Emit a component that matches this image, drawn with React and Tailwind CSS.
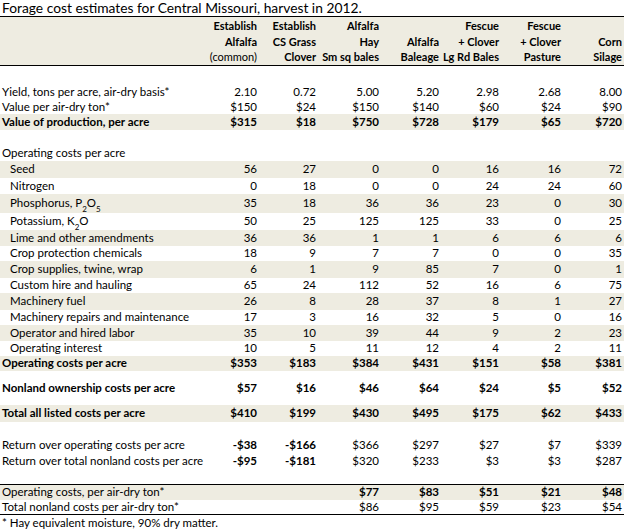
import React from 'react';

const cols = 'grid grid-cols-[200px_59px_59px_63px_60px_60px_62px_61px]';

// header labels, one array per column, lines top to bottom
const heads = [
  ['Establish', 'Alfalfa', '(common)'],
  ['Establish', 'CS Grass', 'Clover'],
  ['Alfalfa', 'Hay', 'Sm sq bales'],
  ['', 'Alfalfa', 'Baleage'],
  ['Fescue', '+ Clover', 'Lg Rd Bales'],
  ['Fescue', '+ Clover', 'Pasture'],
  ['', 'Corn', 'Silage'],
];

const P2O5 = <>Phosphorus, P<sub className="text-[8px] align-[-3px]">2</sub>O<sub className="text-[8px] align-[-3px]">5</sub></>;
const K2O = <>Potassium, K<sub className="text-[8px] align-[-3px]">2</sub>O</>;

const rows = [
  { h: 'h-[18px]' },
  { label: 'Yield, tons per acre, air-dry basis*', h: 'h-[16px]', v: ['2.10', '0.72', '5.00', '5.20', '2.98', '2.68', '8.00'] },
  { label: 'Value per air-dry ton*', h: 'h-[14px]', v: ['$150', '$24', '$150', '$140', '$60', '$24', '$90'] },
  { label: 'Value of production, per acre', h: 'h-[16px]', bg: true, bold: true, v: ['$315', '$18', '$750', '$728', '$179', '$65', '$720'] },
  { h: 'h-[16px]' },
  { label: 'Operating costs per acre', h: 'h-[15px]' },
  { label: 'Seed', sub: true, h: 'h-[17px]', bg: true, v: ['56', '27', '0', '0', '16', '16', '72'] },
  { label: 'Nitrogen', sub: true, h: 'h-[16px]', v: ['0', '18', '0', '0', '24', '24', '60'] },
  { label: P2O5, sub: true, h: 'h-[19px]', bg: true, v: ['35', '18', '36', '36', '23', '0', '30'] },
  { label: K2O, sub: true, h: 'h-[17px]', v: ['50', '25', '125', '125', '33', '0', '25'] },
  { label: 'Lime and other amendments', sub: true, h: 'h-[16px]', bg: true, v: ['36', '36', '1', '1', '6', '6', '6'] },
  { label: 'Crop protection chemicals', sub: true, h: 'h-[15px]', v: ['18', '9', '7', '7', '0', '0', '35'] },
  { label: 'Crop supplies, twine, wrap', sub: true, h: 'h-[17px]', bg: true, v: ['6', '1', '9', '85', '7', '0', '1'] },
  { label: 'Custom hire and hauling', sub: true, h: 'h-[15px]', v: ['65', '24', '112', '52', '16', '6', '75'] },
  { label: 'Machinery fuel', sub: true, h: 'h-[17px]', bg: true, v: ['26', '8', '28', '37', '8', '1', '27'] },
  { label: 'Machinery repairs and maintenance', sub: true, h: 'h-[15px]', v: ['17', '3', '16', '32', '5', '0', '16'] },
  { label: 'Operator and hired labor', sub: true, h: 'h-[16px]', bg: true, v: ['35', '10', '39', '44', '9', '2', '23'] },
  { label: 'Operating interest', sub: true, h: 'h-[15px]', v: ['10', '5', '11', '12', '4', '2', '11'] },
  { label: 'Operating costs per acre', h: 'h-[15px]', bg: true, bold: true, v: ['$353', '$183', '$384', '$431', '$151', '$58', '$381'] },
  { label: 'Nonland ownership costs per acre', h: 'h-[34px]', bold: true, v: ['$57', '$16', '$46', '$64', '$24', '$5', '$52'] },
  { label: 'Total all listed costs per acre', h: 'h-[17px]', bg: true, bold: true, v: ['$410', '$199', '$430', '$495', '$175', '$62', '$433'] },
  { h: 'h-[15px]' },
  { label: 'Return over operating costs per acre', h: 'h-[16px]', v: ['-$38', '-$166', '$366', '$297', '$27', '$7', '$339'], boldCols: [0, 1] },
  { label: 'Return over total nonland costs per acre', h: 'h-[16px]', v: ['-$95', '-$181', '$320', '$233', '$3', '$3', '$287'], boldCols: [0, 1] },
  { h: 'h-[16px]', line: true },
  { label: 'Operating costs, per air-dry ton*', h: 'h-[15px]', bg: true, v: ['', '', '$77', '$83', '$51', '$21', '$48'], boldCols: [2, 3, 4, 5, 6] },
  { label: 'Total nonland costs per air-dry ton*', h: 'h-[15px]', line: true, v: ['', '', '$86', '$95', '$59', '$23', '$54'] },
];

function Row({ r }) {
  const rowCls = `${cols} ${r.h} items-center ${r.bg ? 'bg-[#eeece1]' : ''} ${r.line ? 'border-b border-black' : ''}`;
  return (
    <div className={rowCls}>
      <div className={`whitespace-nowrap ${r.sub ? 'pl-[10px]' : 'pl-[2px]'} ${r.bold ? 'font-bold' : ''}`}>
        {r.label}
      </div>
      {(r.v || []).map((val, i) => (
        <div
          key={i}
          className={`text-right pr-[2px] ${r.bold || (r.boldCols && r.boldCols.includes(i)) ? 'font-bold' : ''}`}
        >
          {val}
        </div>
      ))}
    </div>
  );
}

export default function App() {
  return (
    <div className="w-[624px] h-[530px] bg-white text-black text-[11.5px] leading-none overflow-hidden font-['Lato','Liberation_Sans',sans-serif]">
      {/* Title */}
      <div className="h-[17px] border-b border-black pl-[2px] text-[13.8px] flex items-center whitespace-nowrap">
        Forage cost estimates for Central Missouri, harvest in 2012.
      </div>

      {/* Column headings */}
      <div className={`${cols} bg-[#eeece1] border-b border-black pt-[1px] font-bold text-[11px]`}>
        <div />
        {heads.map((lines, i) => (
          <div key={i} className="flex flex-col text-right pr-[2px]">
            {lines.map((t, j) => (
              <div key={j} className={`h-[15.5px] flex items-center justify-end whitespace-nowrap ${i === 0 && j === 2 ? 'font-normal' : ''}`}>
                {t}
              </div>
            ))}
          </div>
        ))}
      </div>

      {rows.map((r, i) => (
        <Row key={i} r={r} />
      ))}

      <div className="h-[17px] pl-[2px] flex items-center whitespace-nowrap">
        * Hay equivalent moisture, 90% dry matter.
      </div>
    </div>
  );
}
